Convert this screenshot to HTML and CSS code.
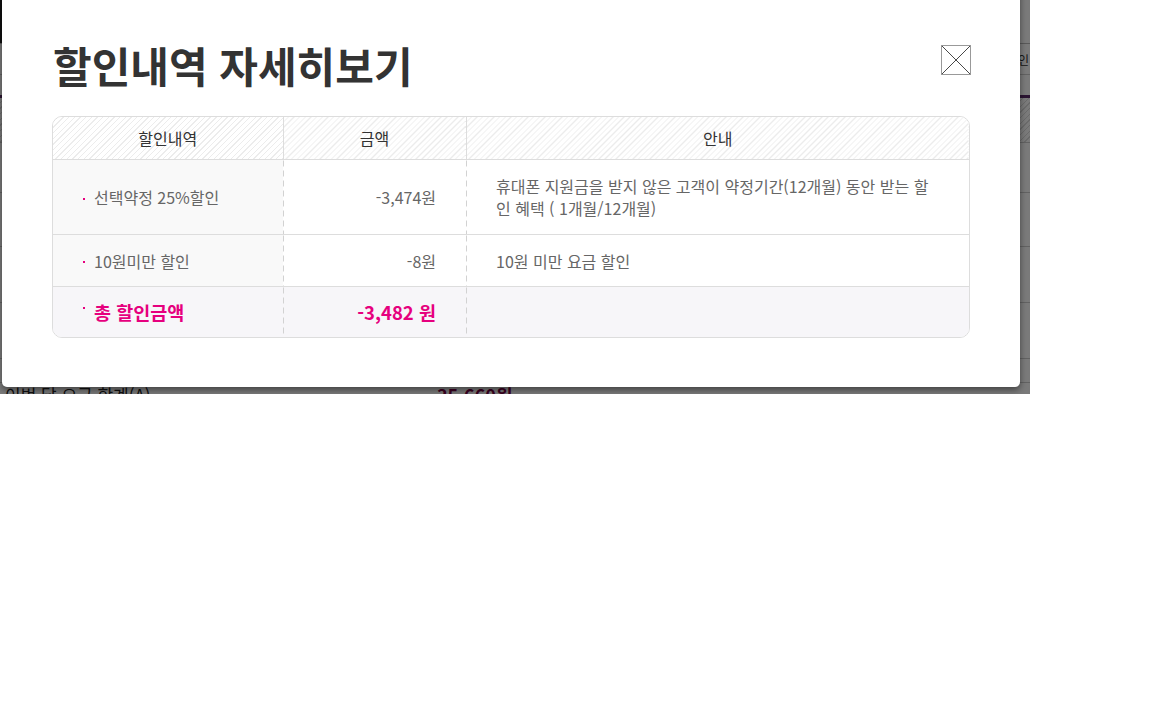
FILE: index.html
```html
<!DOCTYPE html>
<html lang="ko">
<head>
<meta charset="utf-8">
<title>할인내역 자세히보기</title>
<link rel="stylesheet" href="styles.css">
</head>
<body>
<div class="stage">
  <div class="bgpage">
    <div class="bg-top"></div>
    <div class="bg-row bg-row-b"><span class="bg-label">인</span></div>
    <div class="bg-purple"></div>
    <div class="bg-hatch"></div>
    <div class="bg-row bg-row-m"></div>
    <div class="bg-row bg-row-m2"></div>
    <div class="bg-row bg-row-m3"></div>
    <div class="bg-row bg-row-m4"></div>
    <div class="bg-row bg-row-m5"></div>
    <div class="bg-sum">
      <span class="bg-sum-label">이번 달 요금 합계(A)</span>
      <span class="bg-sum-val">35,660원</span>
    </div>
  </div>
  <div class="dim"></div>
  <div class="modal">
    <div class="modal-head">
      <h1 class="title">할인내역 자세히보기</h1>
      <button class="close" type="button" aria-label="닫기">
        <svg width="30" height="30" viewBox="0 0 30 30">
          <rect x="0.5" y="0.5" width="29" height="29" fill="none" stroke="#333" stroke-width="1" stroke-dasharray="1 1"/>
          <line x1="1" y1="1" x2="29" y2="29" stroke="#333" stroke-width="0.9"/>
          <line x1="29" y1="1" x2="1" y2="29" stroke="#333" stroke-width="0.9"/>
        </svg>
      </button>
    </div>
    <div class="tbl-wrap">
      <table class="tbl">
        <colgroup>
          <col class="c1"><col class="c2"><col class="c3">
        </colgroup>
        <thead>
          <tr><th>할인내역</th><th>금액</th><th>안내</th></tr>
        </thead>
        <tbody>
          <tr class="r1">
            <td class="name"><span class="dot"></span>선택약정 25%할인</td>
            <td class="amt">-3,474원</td>
            <td class="desc">휴대폰 지원금을 받지 않은 고객이 약정기간(12개월) 동안 받는 할인 혜택 ( 1개월/12개월)</td>
          </tr>
          <tr class="r2">
            <td class="name"><span class="dot"></span>10원미만 할인</td>
            <td class="amt">-8원</td>
            <td class="desc">10원 미만 요금 할인</td>
          </tr>
          <tr class="total">
            <td class="name"><span class="dot dot-up"></span>총 할인금액</td>
            <td class="amt">-3,482 원</td>
            <td class="desc"></td>
          </tr>
        </tbody>
      </table>
    </div>
  </div>
</div>
</body>
</html>
```

FILE: styles.css
```css
html, body {
  margin: 0;
  padding: 0;
  background: #fff;
}
body {
  font-family: "Noto Sans CJK KR", "Noto Sans", sans-serif;
  color: #333;
}
.stage {
  position: relative;
  width: 1030px;
  height: 394px;
  overflow: hidden;
  background: #fff;
}
.bgpage {
  display: flex;
  flex-direction: column;
  width: 1030px;
}
.bg-top {
  height: 43px;
  border-bottom: 1px solid #bbb;
  background: linear-gradient(90deg, #222 0 4px, #fff 4px);
}
.bg-row {
  border-bottom: 1px solid #ccc;
  background: #fff;
}
.bg-row-b {
  height: 30px;
  display: flex;
  justify-content: flex-end;
  align-items: center;
}
.bg-label {
  font-size: 12px;
  color: #333;
  margin-right: 1px;
}
.bg-purple {
  height: 3px;
  margin-top: 20px;
  background: #5a2a6a;
}
.bg-hatch {
  height: 44px;
  background: repeating-linear-gradient(135deg, #fff 0 3px, #ddd 3px 4px);
  border-bottom: 1px solid #ccc;
}
.bg-row-m { height: 49px; }
.bg-row-m2 { height: 53px; }
.bg-row-m3 { height: 55px; }
.bg-row-m4 { height: 55px; }
.bg-row-m5 { height: 23px; }
.bg-sum {
  display: flex;
  align-items: flex-start;
  height: 40px;
  background: #fff;
}
.bg-sum-label {
  margin-left: 5px;
  font-size: 17px;
  color: #222;
  width: 340px;
  line-height: 24px;
}
.bg-sum-val {
  margin-left: 92px;
  font-size: 18px;
  font-weight: bold;
  color: #7a0044;
  line-height: 24px;
}
.dim {
  position: absolute;
  inset: 0;
  background: rgba(0, 0, 0, 0.52);
}
.modal {
  position: absolute;
  left: 2px;
  top: -20px;
  width: 918px;
  height: 407px;
  padding: 0 50px;
  background: #fff;
  border-radius: 5px;
  box-shadow: 0 3px 6px rgba(0, 0, 0, 0.45);
}
.modal-head {
  display: flex;
  justify-content: space-between;
  align-items: flex-start;
  padding-top: 57px;
  height: 79px;
}
.title {
  margin: 0 0 0 1px;
  font-size: 42px;
  font-weight: bold;
  line-height: 56px;
  color: #333;
}
.close {
  margin: 8px -1px 0 0;
  padding: 0;
  border: 0;
  background: none;
  width: 30px;
  height: 30px;
  display: block;
  cursor: pointer;
}
.close svg { display: block; }
.tbl-wrap {
  border: 1px solid #ddd;
  border-radius: 10px;
  overflow: hidden;
  width: 916px;
}
.tbl {
  width: 916px;
  border-collapse: collapse;
  table-layout: fixed;
}
.c1 { width: 230px; }
.c2 { width: 183px; }
.c3 { width: 503px; }
.tbl th {
  height: 42px;
  padding: 0;
  font-size: 16px;
  font-weight: normal;
  color: #333;
  text-align: center;
  background: repeating-linear-gradient(135deg, #fff 0 3px, #ececec 3px 4px);
  border-bottom: 1px solid #ddd;
  border-left: 1px solid #ddd;
}
.tbl th:first-child { border-left: 0; }
.tbl td {
  padding: 0;
  font-size: 16px;
  color: #666;
  border-top: 1px solid #ddd;
  vertical-align: middle;
  background-color: #fff;
}
.tbl tr:first-child td { border-top: 0; }
.tbl td + td {
  background-image: linear-gradient(#d2d2d2 0 6px, transparent 6px 10px);
  background-size: 1px 10px;
  background-repeat: repeat-y;
  background-position: left top;
}
.tbl .name {
  background-color: #f9f9f9;
  padding-left: 30px;
}
.tbl .amt {
  text-align: right;
  padding-right: 30px;
}
.tbl .desc {
  padding: 0 36px 0 30px;
  line-height: 22px;
}
.r1 td { height: 74px; }
.r2 td { height: 51px; }
.tbl .total td {
  height: 50px;
  background-color: #f7f6f9;
  color: #e6007e;
  font-weight: bold;
}
.total .name { font-size: 18.5px; }
.total .amt { font-size: 18.5px; }
.dot {
  display: inline-block;
  width: 2px;
  height: 2px;
  background: #e6007e;
  margin-right: 9px;
  vertical-align: middle;
  position: relative;
  top: -1px;
}
.dot-up {
  top: -7px;
}
```
